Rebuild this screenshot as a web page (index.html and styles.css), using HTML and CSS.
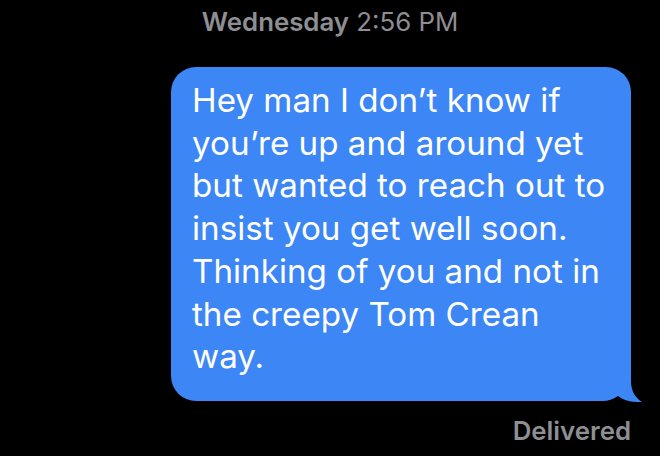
FILE: index.html
```html
<!DOCTYPE html>
<html>
<head>
<meta charset="utf-8">
<link rel="stylesheet" href="styles.css">
</head>
<body>
<div class="thread">
  <div class="stamp"><b>Wednesday</b> 2:56 PM</div>
  <div class="row">
    <div class="bubble">
      <p class="msg">Hey man I don’t know if<br>you’re up and around yet<br>but wanted to reach out to<br>insist you get well soon.<br>Thinking of you and not in<br>the creepy Tom Crean<br>way.</p>
      <svg class="tail" width="40" height="41" viewBox="0 0 40 41"><rect x="0" y="0" width="40" height="41" fill="#000"/><path d="M0 0 H28 V20 C28 31 33 37 39 41 C31 41.5 21 40 15 35 C10 38.5 5 40 0 40 Z" fill="#3d86f5"/></svg>
    </div>
  </div>
  <div class="status">Delivered</div>
</div>
</body>
</html>
```
FILE: styles.css
```css
html, body {
  margin: 0;
  padding: 0;
  background: #000;
}
.thread {
  width: 660px;
  height: 456px;
  display: flex;
  flex-direction: column;
  font-family: Inter, "Noto Sans", sans-serif;
}
.stamp {
  text-align: center;
  color: #8e8e93;
  font-size: 25.8px;
  padding-top: 7px;
  line-height: 30px;
  font-weight: 400;
}
.stamp b {
  font-weight: 600;
}
.row {
  display: flex;
  justify-content: flex-end;
  padding-right: 29px;
  margin-top: 30px;
}
.bubble {
  position: relative;
  width: 460px;
  box-sizing: border-box;
  background: #3d86f5;
  border-radius: 25px;
  padding: 12px 0 23px 21px;
}
.msg {
  margin: 0;
  color: #fff;
  font-size: 33.2px;
  line-height: 42.7px;
  white-space: nowrap;
}
.tail {
  position: absolute;
  right: -12px;
  bottom: -1px;
  display: block;
}
.status {
  text-align: right;
  padding-right: 29px;
  margin-top: 15px;
  color: #8e8e93;
  font-size: 25.8px;
  font-weight: 600;
  line-height: 30px;
}
```
